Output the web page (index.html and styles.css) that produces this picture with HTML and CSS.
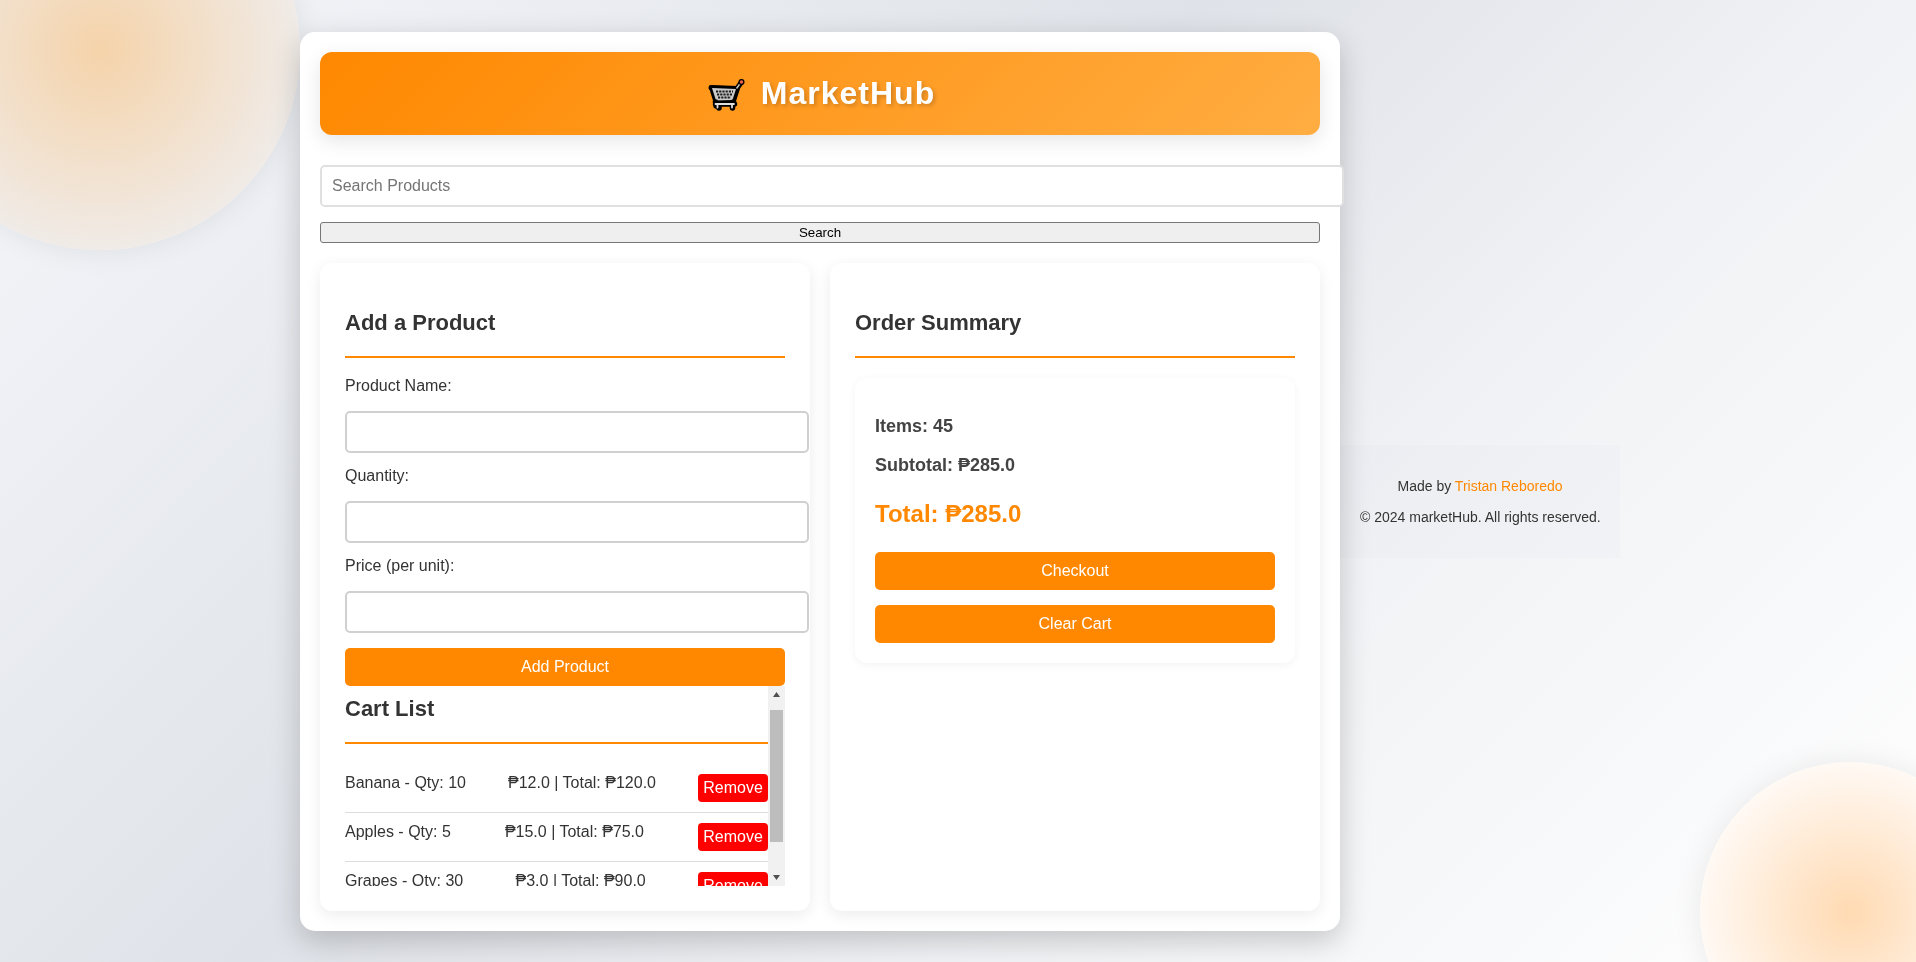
FILE: index.html
```html
<!DOCTYPE html>
<html lang="en">
<head>
<meta charset="utf-8">
<title>MarketHub</title>
<link rel="stylesheet" href="styles.css">
</head>
<body>
<div class="blob blob-top"></div>
<div class="blob blob-bottom"></div>
<main class="app">
  <header class="banner">
    <h1 class="brand">
      <svg class="brand-cart" width="48" height="44" viewBox="0 0 48 44" aria-hidden="true">
        <path d="M6 13.500 L32 14.500 L36.500 8" fill="none" stroke="#000" stroke-width="5" stroke-linecap="round" stroke-linejoin="round"/>
        <path d="M6 13.500 L33 14.500 L29 27 L10.500 28 Z" fill="#000" stroke="#000" stroke-width="4" stroke-linejoin="round"/>
        <path d="M7 14 L31 15 L27.500 26 L11 26.500 Z" fill="#c9c9c9"/>
        <path d="M11 17.500 H28 M12 20.500 H27 M13 23.500 H26" stroke="#1c1c1c" stroke-width="2" stroke-dasharray="2.200 1"/>
        <path d="M31.500 14.500 L35.500 9" stroke="#c4c4c4" stroke-width="1.500"/>
        <circle cx="36.500" cy="8" r="3" fill="#000"/>
        <circle cx="36.500" cy="8" r="1.800" fill="#ef5f4a"/>
        <path d="M10.500 28 L11 32 M28.500 28 L28 32 M10.500 30 H29.500 M14 33 V34 M27.500 33 V34" stroke="#000" stroke-width="5.500" stroke-linecap="round"/>
        <path d="M10.500 30 H29 M12.500 30 V33.500 M27 30 V33.500" stroke="#dedede" stroke-width="1.800" stroke-linecap="round"/>
      </svg>
      <span class="brand-name">MarketHub</span>
    </h1>
  </header>

  <form class="search">
    <input class="search-input" type="text" placeholder="Search Products">
    <button class="search-button" type="button">Search</button>
  </form>

  <div class="columns">
    <section class="panel">
      <h2 class="panel-title">Add a Product</h2>
      <form class="product-form">
        <label class="field-label">Product Name:</label>
        <input class="field-input" type="text">
        <label class="field-label">Quantity:</label>
        <input class="field-input" type="text">
        <label class="field-label">Price (per unit):</label>
        <input class="field-input" type="text">
        <button class="primary add-button" type="button">Add Product</button>
      </form>
      <div class="cart-box">
        <div class="cart-scroll">
          <h2 class="panel-title">Cart List</h2>
          <ul class="cart-list">
            <li class="cart-row"><span>Banana - Qty: 10</span><span>₱12.0 | Total: ₱120.0</span><button class="remove" type="button">Remove</button></li>
            <li class="cart-row"><span>Apples - Qty: 5</span><span>₱15.0 | Total: ₱75.0</span><button class="remove" type="button">Remove</button></li>
            <li class="cart-row"><span>Grapes - Qty: 30</span><span>₱3.0 | Total: ₱90.0</span><button class="remove" type="button">Remove</button></li>
          </ul>
        </div>
        <div class="scrollbar" aria-hidden="true">
          <div class="scroll-arrow"><svg width="9" height="5" viewBox="0 0 9 5"><path d="M4.500 0L8 5H1z" fill="#505050"/></svg></div>
          <div class="scroll-track"><div class="scroll-thumb"></div></div>
          <div class="scroll-arrow"><svg width="9" height="5" viewBox="0 0 9 5"><path d="M1 0H8L4.500 5z" fill="#505050"/></svg></div>
        </div>
      </div>
    </section>

    <section class="panel">
      <h2 class="panel-title">Order Summary</h2>
      <div class="summary">
        <p class="summary-items">Items: 45</p>
        <p class="summary-subtotal">Subtotal: ₱285.0</p>
        <p class="summary-total">Total: ₱285.0</p>
        <button class="primary summary-button" type="button">Checkout</button>
        <button class="primary" type="button">Clear Cart</button>
      </div>
    </section>
  </div>
</main>
<footer class="credits">
  <p class="credit-made">Made by <a class="credit-link" href="#">Tristan Reboredo</a></p>
  <p class="credit-copy">© 2024 marketHub. All rights reserved.</p>
</footer>
</body>
</html>
```

FILE: styles.css
```css
* {
  font-family: "Liberation Sans", Arial, "DejaVu Sans", sans-serif;
}

html, body {
  height: 100%;
  margin: 0;
  overflow: hidden;
}

body {
  display: flex;
  align-items: center;
  justify-content: center;
  box-sizing: border-box;
  padding: 1px 0 0 4px;
  color: #333;
  font-size: 16px;
  line-height: 1.6;
  background: linear-gradient(135deg, #f5f7fa 0%, #dfe2e8 42%, #f1f2f5 66%, #ffffff 100%);
}

.blob {
  position: fixed;
  border-radius: 50%;
  box-shadow: 0 0 30px rgba(0, 0, 0, 0.08);
}

.blob-top {
  left: -100px;
  top: -150px;
  width: 400px;
  height: 400px;
  background: radial-gradient(circle closest-side, #f5d3aa, #f0ebe7);
}

.blob-bottom {
  right: -84px;
  bottom: -100px;
  width: 300px;
  height: 300px;
  background: radial-gradient(circle closest-side, #ffdab2, #fff9f4);
}

.app {
  position: relative;
  width: 1000px;
  flex: none;
  padding: 20px;
  background: #fff;
  border-radius: 15px;
  box-shadow: 0 10px 30px rgba(0, 0, 0, 0.2);
}

.banner {
  margin-bottom: 30px;
  padding: 20px;
  border-radius: 12px;
  background: linear-gradient(135deg, #ff8800, #ffad42);
  box-shadow: 0 6px 20px rgba(0, 0, 0, 0.1);
}

.brand {
  display: flex;
  align-items: center;
  justify-content: center;
  gap: 8px;
  margin: 0;
  color: #fff;
  font-size: 32px;
  line-height: 43px;
  letter-spacing: 1px;
  text-shadow: 2px 2px 4px rgba(0, 0, 0, 0.2);
}

.brand-cart {
  display: block;
  margin: 2px 0 -3px;
}

.search-input {
  display: block;
  width: 100%;
  margin-bottom: 15px;
  padding: 10px;
  border: 2px solid #e0e0e0;
  border-radius: 5px;
  font-size: 16px;
  background: #fff;
}

.search-button {
  display: block;
  width: 100%;
  height: 21px;
  margin-bottom: 20px;
  padding: 1px 6px;
  border: 1px solid #767676;
  border-radius: 3px;
  background: #efefef;
  color: #000;
  font-size: 13.33px;
  line-height: 15px;
}

.columns {
  display: grid;
  grid-template-columns: 1fr 1fr;
  gap: 20px;
}

.panel {
  height: 598px;
  padding: 25px;
  border-radius: 12px;
  background: #fff;
  box-shadow: 0 4px 15px rgba(0, 0, 0, 0.08);
}

.panel-title {
  margin: 17px 0 15px;
  padding-bottom: 16px;
  border-bottom: 2px solid #ff8800;
  color: #333;
  font-size: 22px;
  line-height: 35px;
}

.field-label {
  display: block;
  height: 26px;
  margin-bottom: 12px;
  line-height: 26px;
}

.field-input {
  display: block;
  width: 100%;
  margin-bottom: 10px;
  padding: 10px;
  border: 2px solid #d0d0d0;
  border-radius: 5px;
  font-size: 16px;
  background: #fff;
}

.primary {
  display: block;
  width: 100%;
  height: 38px;
  padding: 10px;
  border: 0;
  border-radius: 5px;
  background: #ff8800;
  color: #fff;
  font-size: 16px;
  line-height: 18px;
}

.add-button {
  margin-top: 15px;
}

.cart-box {
  display: flex;
  width: 440px;
  height: 200px;
}

.cart-scroll {
  flex: 1;
  min-width: 0;
  overflow: hidden;
}

.cart-scroll .panel-title {
  margin-top: 5px;
}

.scrollbar {
  display: flex;
  flex-direction: column;
  flex: none;
  width: 17px;
  background: #f1f1f1;
}

.scroll-arrow {
  display: flex;
  align-items: center;
  justify-content: center;
  height: 17px;
  flex: none;
}

.scroll-track {
  flex: 1;
  padding: 7px 2px 0;
}

.scroll-thumb {
  height: 132px;
  background: #bdbdbd;
}

.cart-list {
  margin: 20px 0 0;
  padding: 0;
  list-style: none;
}

.cart-row {
  display: flex;
  align-items: flex-start;
  justify-content: space-between;
  padding: 10px 0;
  border-bottom: 1px solid #ddd;
  line-height: 18px;
}

.remove {
  width: 70px;
  height: 28px;
  padding: 5px;
  border: 0;
  border-radius: 4px;
  background: #ff0000;
  color: #fff;
  font-size: 16px;
  line-height: 18px;
}

.summary {
  margin-top: 20px;
  padding: 20px;
  border-radius: 12px;
  background: #fff;
  box-shadow: 0 2px 10px rgba(0, 0, 0, 0.05);
}

.summary-items,
.summary-subtotal {
  color: #444;
  font-size: 18px;
  font-weight: 700;
}

.summary-items {
  margin: 14px 0 10px;
}

.summary-subtotal {
  margin: 0;
}

.summary-total {
  margin: 15px 0 19px;
  color: #ff8800;
  font-size: 24px;
  font-weight: 700;
}

.summary-button {
  margin-bottom: 15px;
}

.credits {
  position: relative;
  flex: none;
  margin-top: 40px;
  padding: 20px;
  width: 240px;
  background: rgba(0, 0, 50, 0.012);
  font-size: 14px;
  text-align: center;
}

.credit-made {
  margin: 10px 0 8px;
}

.credit-copy {
  margin: 0 0 10px;
  white-space: nowrap;
}

.credit-link {
  color: #ff8800;
  text-decoration: none;
}
```
